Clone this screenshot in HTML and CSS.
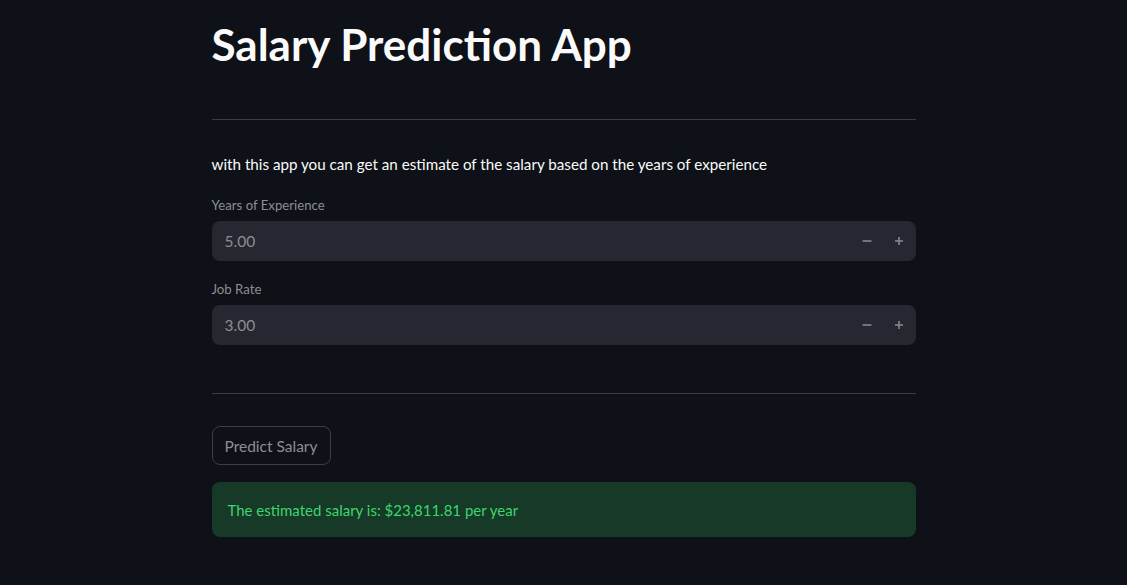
FILE: index.html
```html
<!DOCTYPE html>
<html>
<head>
<meta charset="utf-8">
<link rel="stylesheet" href="styles.css">
</head>
<body>
<main class="main">
  <h1 class="title">Salary Prediction App</h1>
  <hr class="divider first">
  <p class="intro">with this app you can get an estimate of the salary based on the years of experience</p>
  <div class="field">
    <label class="label">Years of Experience</label>
    <div class="num-input">
      <span class="value">5.00</span>
      <span class="steps">
        <span class="step"><svg width="10" height="10" viewBox="0 0 10 10"><rect x="0.5" y="4.2" width="9" height="1.6" fill="currentColor"/></svg></span>
        <span class="step"><svg width="10" height="10" viewBox="0 0 10 10"><rect x="1" y="4.2" width="8" height="1.6" fill="currentColor"/><rect x="4.2" y="1" width="1.6" height="8" fill="currentColor"/></svg></span>
      </span>
    </div>
  </div>
  <div class="field">
    <label class="label">Job Rate</label>
    <div class="num-input">
      <span class="value">3.00</span>
      <span class="steps">
        <span class="step"><svg width="10" height="10" viewBox="0 0 10 10"><rect x="0.5" y="4.2" width="9" height="1.6" fill="currentColor"/></svg></span>
        <span class="step"><svg width="10" height="10" viewBox="0 0 10 10"><rect x="1" y="4.2" width="8" height="1.6" fill="currentColor"/><rect x="4.2" y="1" width="1.6" height="8" fill="currentColor"/></svg></span>
      </span>
    </div>
  </div>
  <hr class="divider second">
  <button class="btn">Predict Salary</button>
  <div class="success">The estimated salary is: $23,811.81 per year</div>
</main>
</body>
</html>
```
FILE: styles.css
```css
html, body {
  margin: 0;
  padding: 0;
  background: #0e1117;
  color: #fafafa;
  font-family: "Lato", "Noto Sans", sans-serif;
}
.main {
  width: 704px;
  margin: 0 auto;
  padding-top: 18px;
  display: flex;
  flex-direction: column;
}
.title {
  margin: 0;
  font-size: 44px;
  font-weight: 700;
  line-height: 52px;
}
.divider {
  border: none;
  height: 1px;
  background: #3b3d44;
  margin: 0;
  width: 100%;
}
.first { margin-top: 49px; }
.intro {
  margin: 32px 0 0;
  font-size: 15.2px;
  line-height: 24px;
}
.field { display: flex; flex-direction: column; margin-top: 19px; }
.field + .field { margin-top: 18px; }
.label {
  font-size: 13.2px;
  color: #8d8e93;
  line-height: 20px;
  margin-bottom: 6px;
}
.num-input {
  height: 40px;
  background: #262730;
  border-radius: 8px;
  display: flex;
  align-items: center;
  justify-content: space-between;
  padding: 0 10px 0 13px;
}
.value { font-size: 15.5px; color: #8d8e93; }
.steps { display: flex; gap: 22px; color: #85868c; padding-right: 2px; }
.step { display: flex; }
.second { margin-top: 48px; }
.btn {
  align-self: flex-start;
  margin-top: 32px;
  height: 39px;
  padding: 0 12px;
  background: transparent;
  border: 1px solid #3c3e45;
  border-radius: 8px;
  color: #8d8e93;
  font-family: inherit;
  font-size: 15.5px;
}
.success {
  margin-top: 17px;
  height: 55px;
  box-sizing: border-box;
  background: #173928;
  border-radius: 8px;
  color: #3dd56d;
  font-size: 15px;
  display: flex;
  align-items: center;
  padding: 0 16px;
}
```
